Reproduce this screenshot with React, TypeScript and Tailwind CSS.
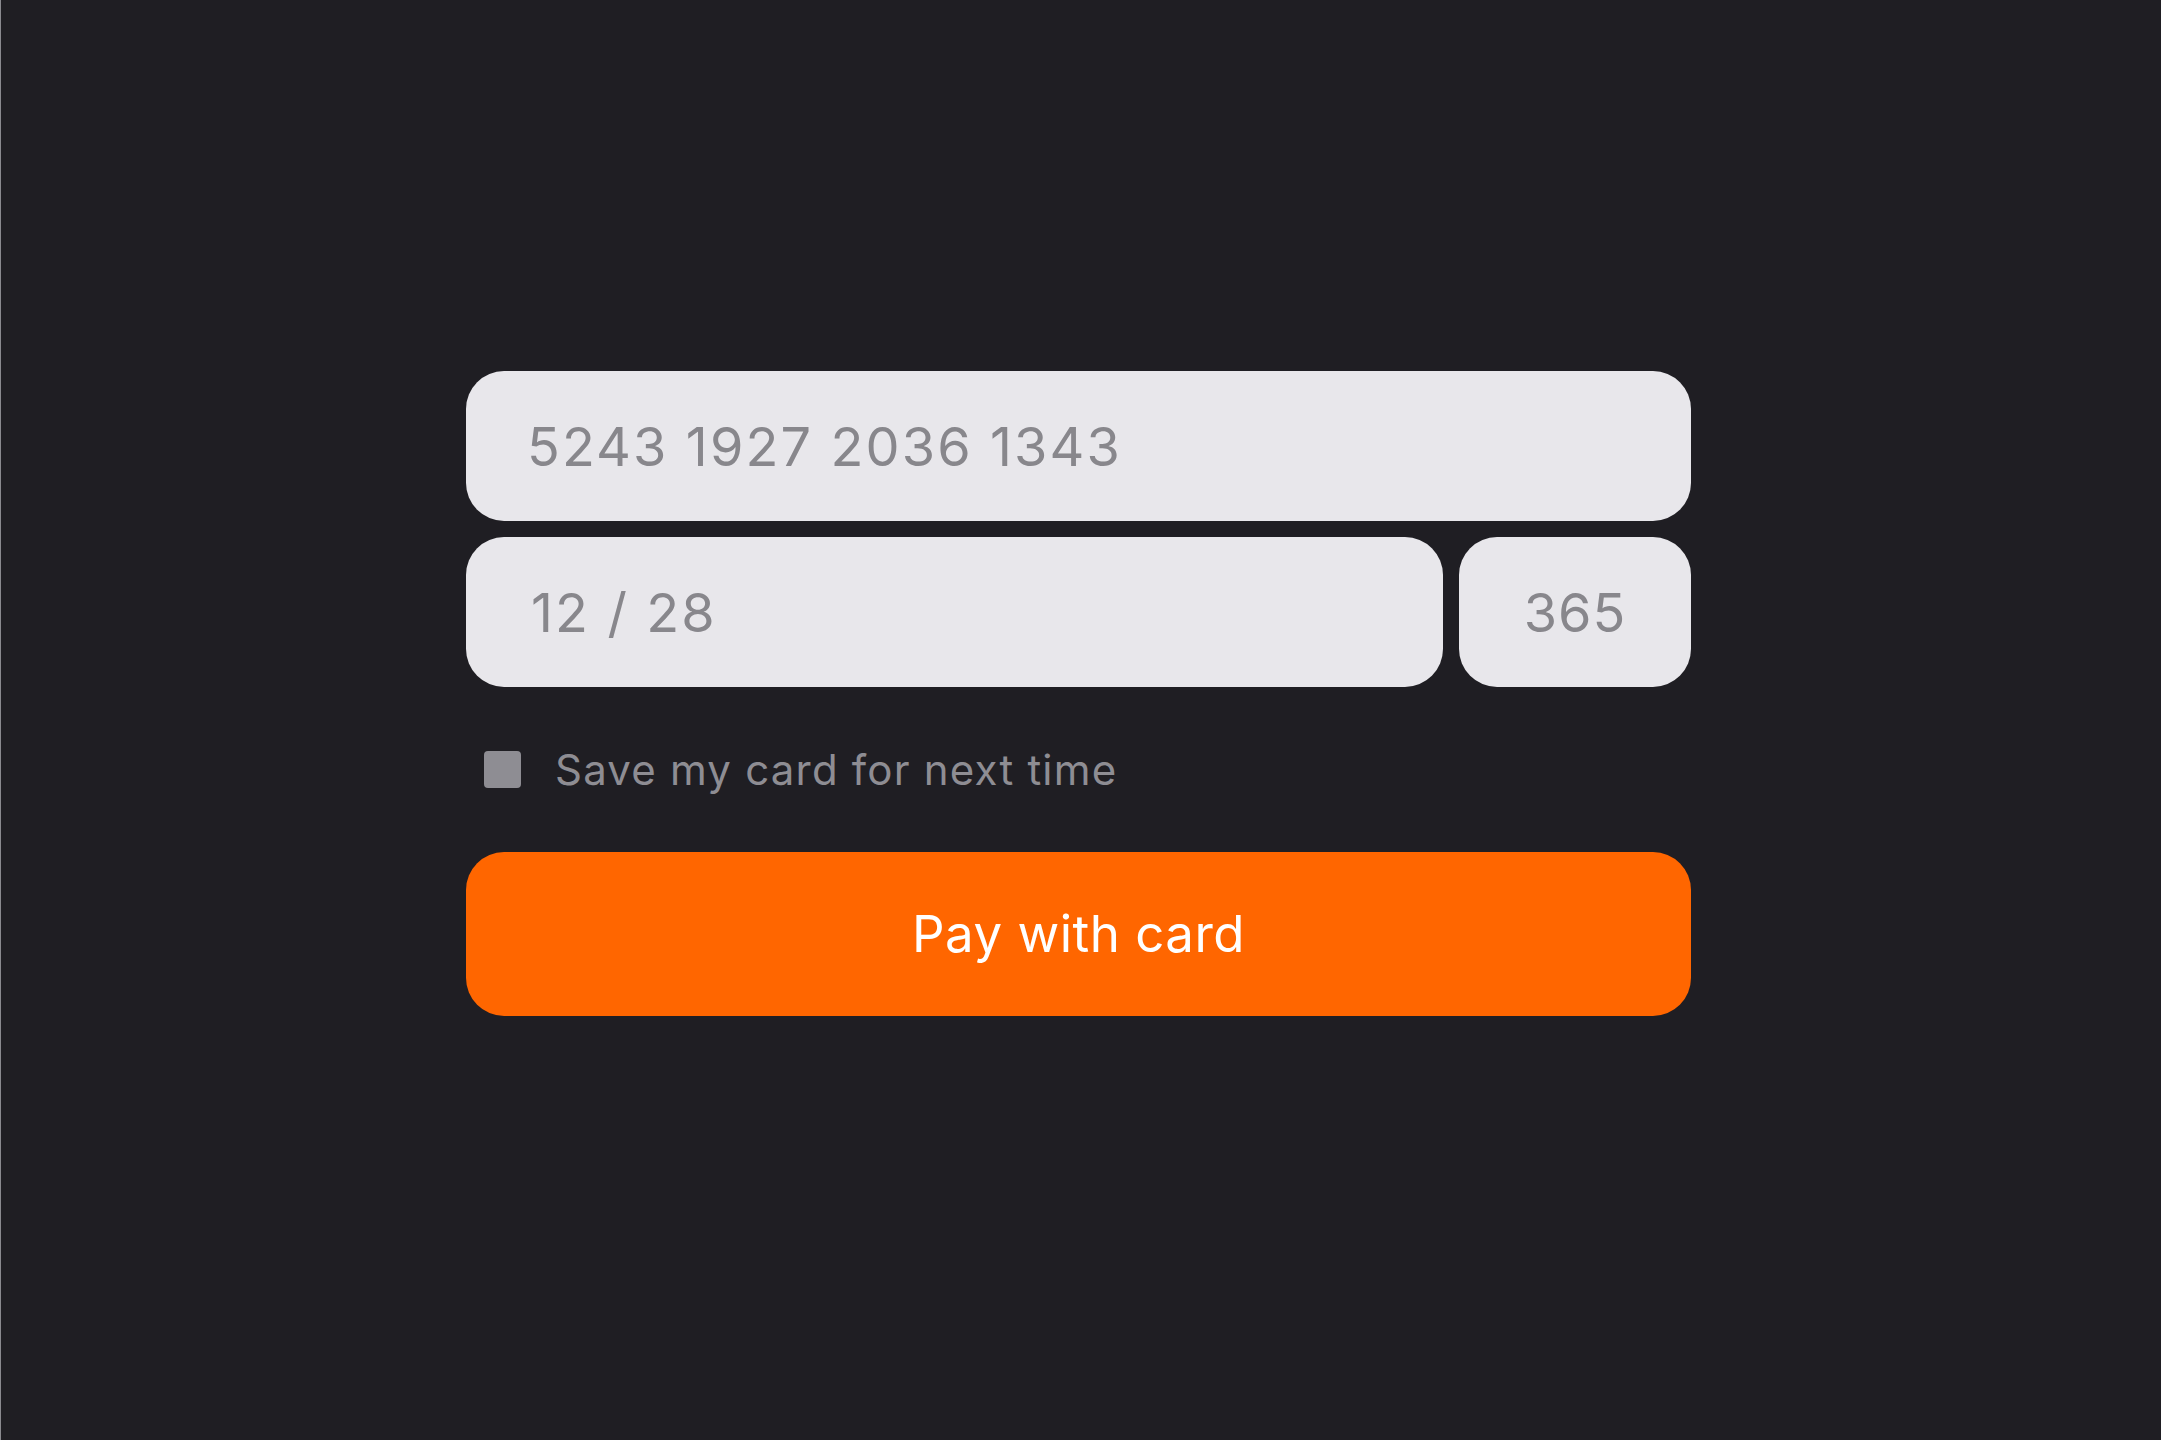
import { useState } from 'react';

export default function App() {
  const [saveCard, setSaveCard] = useState(false);

  return (
    <div
      className="min-h-screen w-full bg-[#1f1e23] border-l border-[#8a8a8f] pt-[371px] pl-[465px]"
      style={{ fontFamily: 'Inter, "Noto Sans", sans-serif' }}
    >
      <div className="w-[1225px] flex flex-col">
        <div className="h-[150px] rounded-[38px] bg-[#e8e7eb] flex items-center pl-[61px]">
          <span className="text-[54px] text-[#88878c] tracking-[2.1px]">5243 1927 2036 1343</span>
        </div>

        <div className="flex gap-[16px] mt-[16px]">
          <div className="flex-1 h-[150px] rounded-[38px] bg-[#e8e7eb] flex items-center pl-[65px]">
            <span className="text-[54px] text-[#88878c] tracking-[2.1px]">12 / 28</span>
          </div>
          <div className="w-[232px] h-[150px] rounded-[38px] bg-[#e8e7eb] flex items-center justify-center">
            <span className="text-[54px] text-[#88878c] tracking-[1px]">365</span>
          </div>
        </div>

        <label className="flex items-center h-[50px] mt-[57px] pl-[18px] cursor-pointer">
          <span
            onClick={() => setSaveCard(!saveCard)}
            className={`w-[37px] h-[37px] rounded-[4px] ${saveCard ? 'bg-[#ff6600]' : 'bg-[#8e8d93]'}`}
          />
          <span className="ml-[34px] text-[42px] text-[#8e8d93] tracking-[1.2px]">Save my card for next time</span>
        </label>

        <button className="mt-[58px] h-[164px] rounded-[38px] bg-[#ff6600] text-white text-[51px] tracking-[0.5px] flex items-center justify-center">
          Pay with card
        </button>
      </div>
    </div>
  );
}
